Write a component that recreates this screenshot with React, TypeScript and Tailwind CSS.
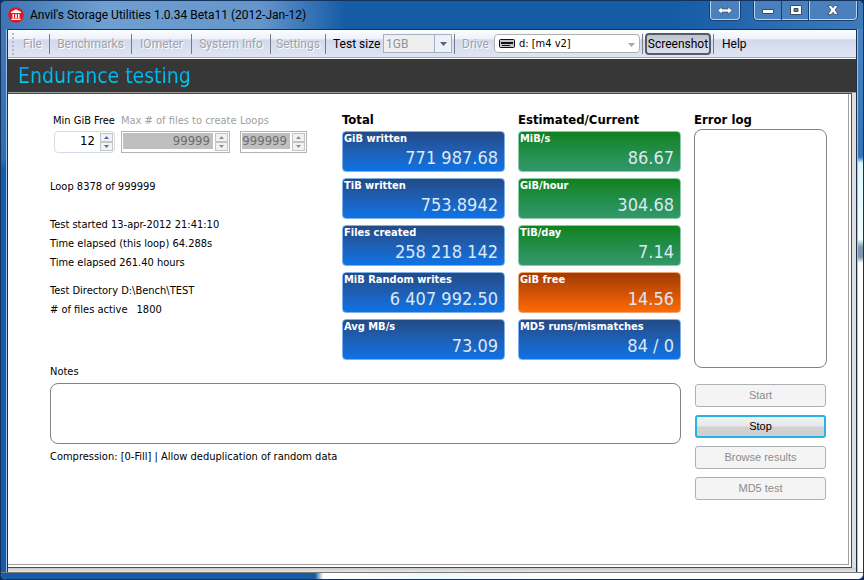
import type { ReactNode } from "react";

const menus = [
  { label: "File", width: "w-[33px]" },
  { label: "Benchmarks", width: "w-[81px]" },
  { label: "IOmeter", width: "w-[59px]" },
  { label: "System Info", width: "w-[78px]" },
  { label: "Settings", width: "w-[54px]" }
];

const totals = [
  { label: "GiB written", value: "771 987.68", tone: "blue" },
  { label: "TiB written", value: "753.8942", tone: "blue" },
  { label: "Files created", value: "258 218 142", tone: "blue" },
  { label: "MiB Random writes", value: "6 407 992.50", tone: "blue" },
  { label: "Avg MB/s", value: "73.09", tone: "blue" }
];

const current = [
  { label: "MiB/s", value: "86.67", tone: "green" },
  { label: "GiB/hour", value: "304.68", tone: "green" },
  { label: "TiB/day", value: "7.14", tone: "green" },
  { label: "GiB free", value: "14.56", tone: "orange" },
  { label: "MD5 runs/mismatches", value: "84 / 0", tone: "blue" }
];

const tones: Record<string, string> = {
  blue: "from-[#234b86] to-[#0b73e6] border-[#7fb0ea]",
  green: "from-[#0f821b] to-[#32986a] border-[#8cc9a4]",
  orange: "from-[#a23b04] to-[#ff6a05] border-[#f0a470]"
};

function Logo() {
  return (
    <svg viewBox="0 0 16 16" className="size-4 shrink-0" aria-hidden>
      <circle cx="8" cy="8" r="7.8" fill="#e0171f" />
      <path d="M8 2.200 3 5v1h10V5zM4.500 7H6v4H4.500zM7.200 7h1.600v4H7.200zM10 7h1.500v4H10zM3.500 11.500h9V13h-9z" fill="#fff" />
    </svg>
  );
}

function TitleBar() {
  const button = "flex items-center justify-center border-[#bcd4ee] bg-[#4a80bd] shadow-[0_0_0_1px_#1b3f70]";
  return (
    <header className="flex h-7 items-start bg-[linear-gradient(90deg,#3c74b4_0,#6f9fd0_12%,#6596cb_30%,#155ba6_40%,#155ba6_78%,#3f7abb_100%)] pl-[7px] pr-1.5">
      <div className="flex h-7 flex-1 items-center gap-1.5">
        <Logo />
        <h1 className="whitespace-nowrap font-[Roboto,sans-serif] text-[12px] leading-4 text-black">
          Anvil's Storage Utilities 1.0.34 Beta11 (2012-Jan-12)
        </h1>
      </div>
      <button aria-label="Move to other monitor" className={`${button} mr-3.5 h-[19px] w-[30px] rounded-b border border-t-0`}>
        <svg width="16" height="9" viewBox="0 0 16 9" aria-hidden>
          <path d="M.8 4.5 5 .7v2.3h6V.7l4.200 3.800L11 8.300V6H5v2.300z" fill="#fff" stroke="#3c4a60" strokeWidth=".7" />
        </svg>
      </button>
      <div className="flex">
        <button aria-label="Minimize" className={`${button} h-[19px] w-7 rounded-bl border border-t-0`}>
          <svg width="12" height="6" viewBox="0 0 12 6" className="mt-1" aria-hidden>
            <path d="M.5 .5h11v4H.5z" fill="#fff" stroke="#3c4a60" />
          </svg>
        </button>
        <button aria-label="Maximize" className={`${button} h-[19px] w-[27px] border-b`}>
          <svg width="12" height="10" viewBox="0 0 12 10" aria-hidden>
            <path fillRule="evenodd" d="M.5 .5h11v9H.5zM4 3.5v3h4v-3z" fill="#fff" stroke="#3c4a60" />
          </svg>
        </button>
        <button aria-label="Close" className={`${button} h-[19px] w-[48px] rounded-br border border-t-0`}>
          <svg width="12" height="10" viewBox="0 0 12 10" aria-hidden>
            <path d="M.7 .5h3.4L6 2.7 7.9.5h3.4L8 5l3.3 4.5H7.9L6 7.3 4.1 9.5H.7L4 5z" fill="#fff" stroke="#3c4a60" strokeWidth=".8" />
          </svg>
        </button>
      </div>
    </header>
  );
}

function Divider() {
  return <span className="h-5 w-px shrink-0 bg-[#777b88]" />;
}

function Arrow({ color }: { color: string }) {
  return (
    <svg width="7" height="4" viewBox="0 0 7 4" aria-hidden>
      <path d="M0 0h7L3.5 4z" fill={color} />
    </svg>
  );
}

function Toolbar() {
  return (
    <nav className="flex h-7 items-center whitespace-nowrap border-b border-[#9fa6b5] bg-[linear-gradient(#fcfdff_0,#eef1fa_34%,#d3d9ec_36%,#e0e5f5_100%)] font-[Roboto,sans-serif] text-[12px] leading-4 text-black">
      <span className="ml-1 mr-0.5 h-[22px] border-l-2 border-dotted border-[#b4b9c6]" />
      {menus.map((m) => (
        <div key={m.label} className="flex items-center">
          <button disabled className={`${m.width} text-center text-[#a3a3a8] [text-shadow:1px_1px_#fff]`}>
            {m.label}
          </button>
          <Divider />
        </div>
      ))}
      <label htmlFor="size" className="ml-[7px] w-[50px]">Test size</label>
      <div className="relative mr-0.5 h-[19px] w-[69px] border border-[#a5b0c3] bg-[#efefef]">
        <select id="size" disabled className="block h-full w-full appearance-none pl-0.5 leading-4 text-[#8c93a0] opacity-100">
          <option>1GB</option>
        </select>
        <span className="pointer-events-none absolute inset-y-0 right-0 flex w-[17px] items-center justify-center border-l border-[#a5b0c3] bg-[#edf1f8]">
          <Arrow color="#52617f" />
        </span>
      </div>
      <Divider />
      <label htmlFor="drive" className="ml-[7px] w-8 text-[#a3a3a8] [text-shadow:1px_1px_#fff]">Drive</label>
      <div className="relative mr-0.5 h-[19px] w-[146px] rounded-sm border border-[#b0b0b0] bg-white">
        <select id="drive" className="block h-full w-full appearance-none pl-6 font-['DejaVu_Sans_Condensed',sans-serif] text-[11px] leading-4">
          <option>d: [m4 v2]</option>
        </select>
        <svg width="16" height="9" viewBox="0 0 16 9" className="pointer-events-none absolute left-1 top-1" aria-hidden>
          <rect x=".5" y=".5" width="15" height="8" rx="1" fill="#c4c4cc" stroke="#111" />
          <path d="M2 3h12v2H2zM3 6h8v1H3z" fill="#111" />
        </svg>
        <span className="pointer-events-none absolute inset-y-0 right-1 flex items-center pt-0.5">
          <Arrow color="#a8a8a8" />
        </span>
      </div>
      <Divider />
      <button className="mx-0.5 h-[22px] w-[66px] rounded border-2 border-[#555b68] bg-gradient-to-b from-[#bfc3d0] to-[#dde1ef]">
        <span className="flex justify-center">Screenshot</span>
      </button>
      <Divider />
      <button className="ml-2">Help</button>
    </nav>
  );
}

type SpinnerProps = {
  id: string;
  label: string;
  value: string;
  width: string;
  disabled?: boolean;
};

function Spinner({ id, label, value, width, disabled }: SpinnerProps) {
  const arrow = disabled ? "#8e8e8e" : "#5068b8";
  return (
    <div className={width}>
      <label htmlFor={id} className={`block whitespace-nowrap leading-5 ${disabled ? "text-[#a0a0a0]" : "text-black"}`}>
        {label}
      </label>
      <div className={`flex h-[22px] gap-0.5 border p-px ${disabled ? "border-[#b4b4b4]" : "ml-px rounded-sm border-[#d5dbe6]"}`}>
        <input
          id={id}
          defaultValue={value}
          disabled={disabled}
          className={`h-4 min-w-0 flex-1 pr-[3px] text-right text-[13px] leading-4 ${disabled ? "bg-[#bfbfbf] text-[#6d6d6d]" : "bg-white text-black"}`}
        />
        <div className="flex w-[13px] flex-col">
          <button aria-label={`Increase ${label}`} disabled={disabled} className="flex flex-1 items-center justify-center border border-[#c4c4c4] bg-[#f2f2f2]">
            <svg width="5" height="3" viewBox="0 0 5 3" aria-hidden><path d="M0 3h5L2.5 0z" fill={arrow} /></svg>
          </button>
          <button aria-label={`Decrease ${label}`} disabled={disabled} className="flex flex-1 items-center justify-center border border-[#c4c4c4] bg-[#f2f2f2]">
            <svg width="5" height="3" viewBox="0 0 5 3" aria-hidden><path d="M0 0h5L2.5 3z" fill={arrow} /></svg>
          </button>
        </div>
      </div>
    </div>
  );
}

function Tiles({ title, items }: { title: string; items: typeof totals }) {
  return (
    <section className="w-[163px]">
      <h3 className="text-[13px] font-bold leading-[17px]">{title}</h3>
      <dl className="mt-[3px] flex flex-col gap-1.5">
        {items.map((t) => (
          <div key={t.label} className={`h-[41px] rounded border bg-gradient-to-b pl-px pr-1.5 ${tones[t.tone]}`}>
            <dt className="whitespace-nowrap text-[11px] font-bold leading-[14px] text-white">{t.label}</dt>
            <dd className="text-right text-[18px] leading-6 text-[#dce8f4]">{t.value}</dd>
          </div>
        ))}
      </dl>
    </section>
  );
}

function ActionButton({ children, active }: { children: ReactNode; active?: boolean }) {
  return (
    <button
      disabled={!active}
      className={`h-[23px] rounded-[3px] text-center font-['Liberation_Sans',sans-serif] text-[11px] ${
        active
          ? "border-2 border-[#25b4e4] bg-[linear-gradient(#f3f3f3_0,#e6e6e6_48%,#d2d2d2_52%,#cfcfcf_100%)] text-black"
          : "border border-[#adb2b5] bg-[#f4f4f4] text-[#8c8c8c]"
      }`}
    >
      {children}
    </button>
  );
}

function EnduranceTest() {
  return (
    <main className="mr-1 flex flex-1 gap-[13px] border-b border-r border-[#4c4c4c] bg-white pl-[42px] pr-6 pt-[17px] shadow-[inset_-2px_-2px_#fff,inset_-3px_-3px_#a0a0a0]">
      <div className="min-w-0 flex-1">
        <div className="flex gap-[13px]">
          <div className="min-w-0 flex-1 whitespace-nowrap leading-[19px]">
            <div className="flex pl-[3px]">
              <Spinner id="min-free" label="Min GiB Free" value="12" width="w-[62px] mr-[6px]" />
              <Spinner id="max-files" label="Max # of files to create" value="99999" width="w-[109px] mr-[10px]" disabled />
              <Spinner id="loops" label="Loops" value="999999" width="w-[67px]" disabled />
            </div>
            <p className="mt-6">Loop 8378 of 999999</p>
            <div className="mt-[19px]">
              <p>Test started 13-apr-2012 21:41:10</p>
              <p>Time elapsed (this loop) 64.288s</p>
              <p>Time elapsed 261.40 hours</p>
            </div>
            <div className="mt-[9px]">
              <p>Test Directory D:\Bench\TEST</p>
              <p className="flex gap-[9px]"><span># of files active</span><span>1800</span></p>
            </div>
          </div>
          <Tiles title="Total" items={totals} />
          <Tiles title="Estimated/Current" items={current} />
        </div>
        <label htmlFor="notes" className="block leading-[23px]">Notes</label>
        <textarea id="notes" className="block h-[61px] w-full resize-none rounded-lg border border-[#828282] bg-white p-2" />
        <p className="mt-[3px] leading-5">Compression: [0-Fill] | Allow deduplication of random data</p>
      </div>
      <aside className="w-[133px]">
        <h3 className="text-[13px] font-bold leading-[17px]">Error log</h3>
        <div role="log" className="mt-px h-[239px] rounded-lg border border-[#828282]" />
        <div className="mx-px mt-4 flex flex-col gap-2">
          <ActionButton>Start</ActionButton>
          <ActionButton active>Stop</ActionButton>
          <ActionButton>Browse results</ActionButton>
          <ActionButton>MD5 test</ActionButton>
        </div>
      </aside>
    </main>
  );
}

export default function App() {
  return (
    <div className="min-h-screen bg-[#0b2c5c] font-['DejaVu_Sans_Condensed',sans-serif] text-[11px] text-black">
      <div className="flex min-h-screen flex-col overflow-hidden rounded-md border border-[#14325e] bg-[#7fb0e0]">
        <TitleBar />
        <div className="flex flex-1">
          <div className="w-[6px] border-r border-[#9cc4ea] bg-[linear-gradient(#4179b8_0,#2f6db2_130px,#155ba6_140px)]" />
          <div className="flex min-w-0 flex-1 flex-col border-x border-t border-[#1a2f4c] bg-[#dedede]">
            <Toolbar />
            <div className="h-px bg-white" />
            <div className="flex h-[34px] items-center border-b border-[#9b9b9b] bg-[#373737] pl-2.5">
              <h2 className="bg-gradient-to-b from-[#128df0] to-[#08e2ee] bg-clip-text text-[21px] leading-7 text-transparent">
                Endurance testing
              </h2>
            </div>
            <div className="mr-1 h-px bg-[#4c4c4c]" />
            <EnduranceTest />
            <div className="h-1 bg-gradient-to-b from-[#cacaca] to-[#e6e6e6]" />
          </div>
          <div className="w-[6px] border-l border-[#9cc4ea] bg-[linear-gradient(#4b83c0_0,#3673b6_120px,#3673b6_128px,#dff8ff_134px,#f2fdff_210px,#8298ac_218px,#8298ac_228px,#fff_234px)]" />
        </div>
        <div className="h-[7px] border-t border-[#777] bg-[linear-gradient(90deg,#155ba6_314px,#fff_322px,#eefaff_430px,#fff_600px)]" />
      </div>
    </div>
  );
}
